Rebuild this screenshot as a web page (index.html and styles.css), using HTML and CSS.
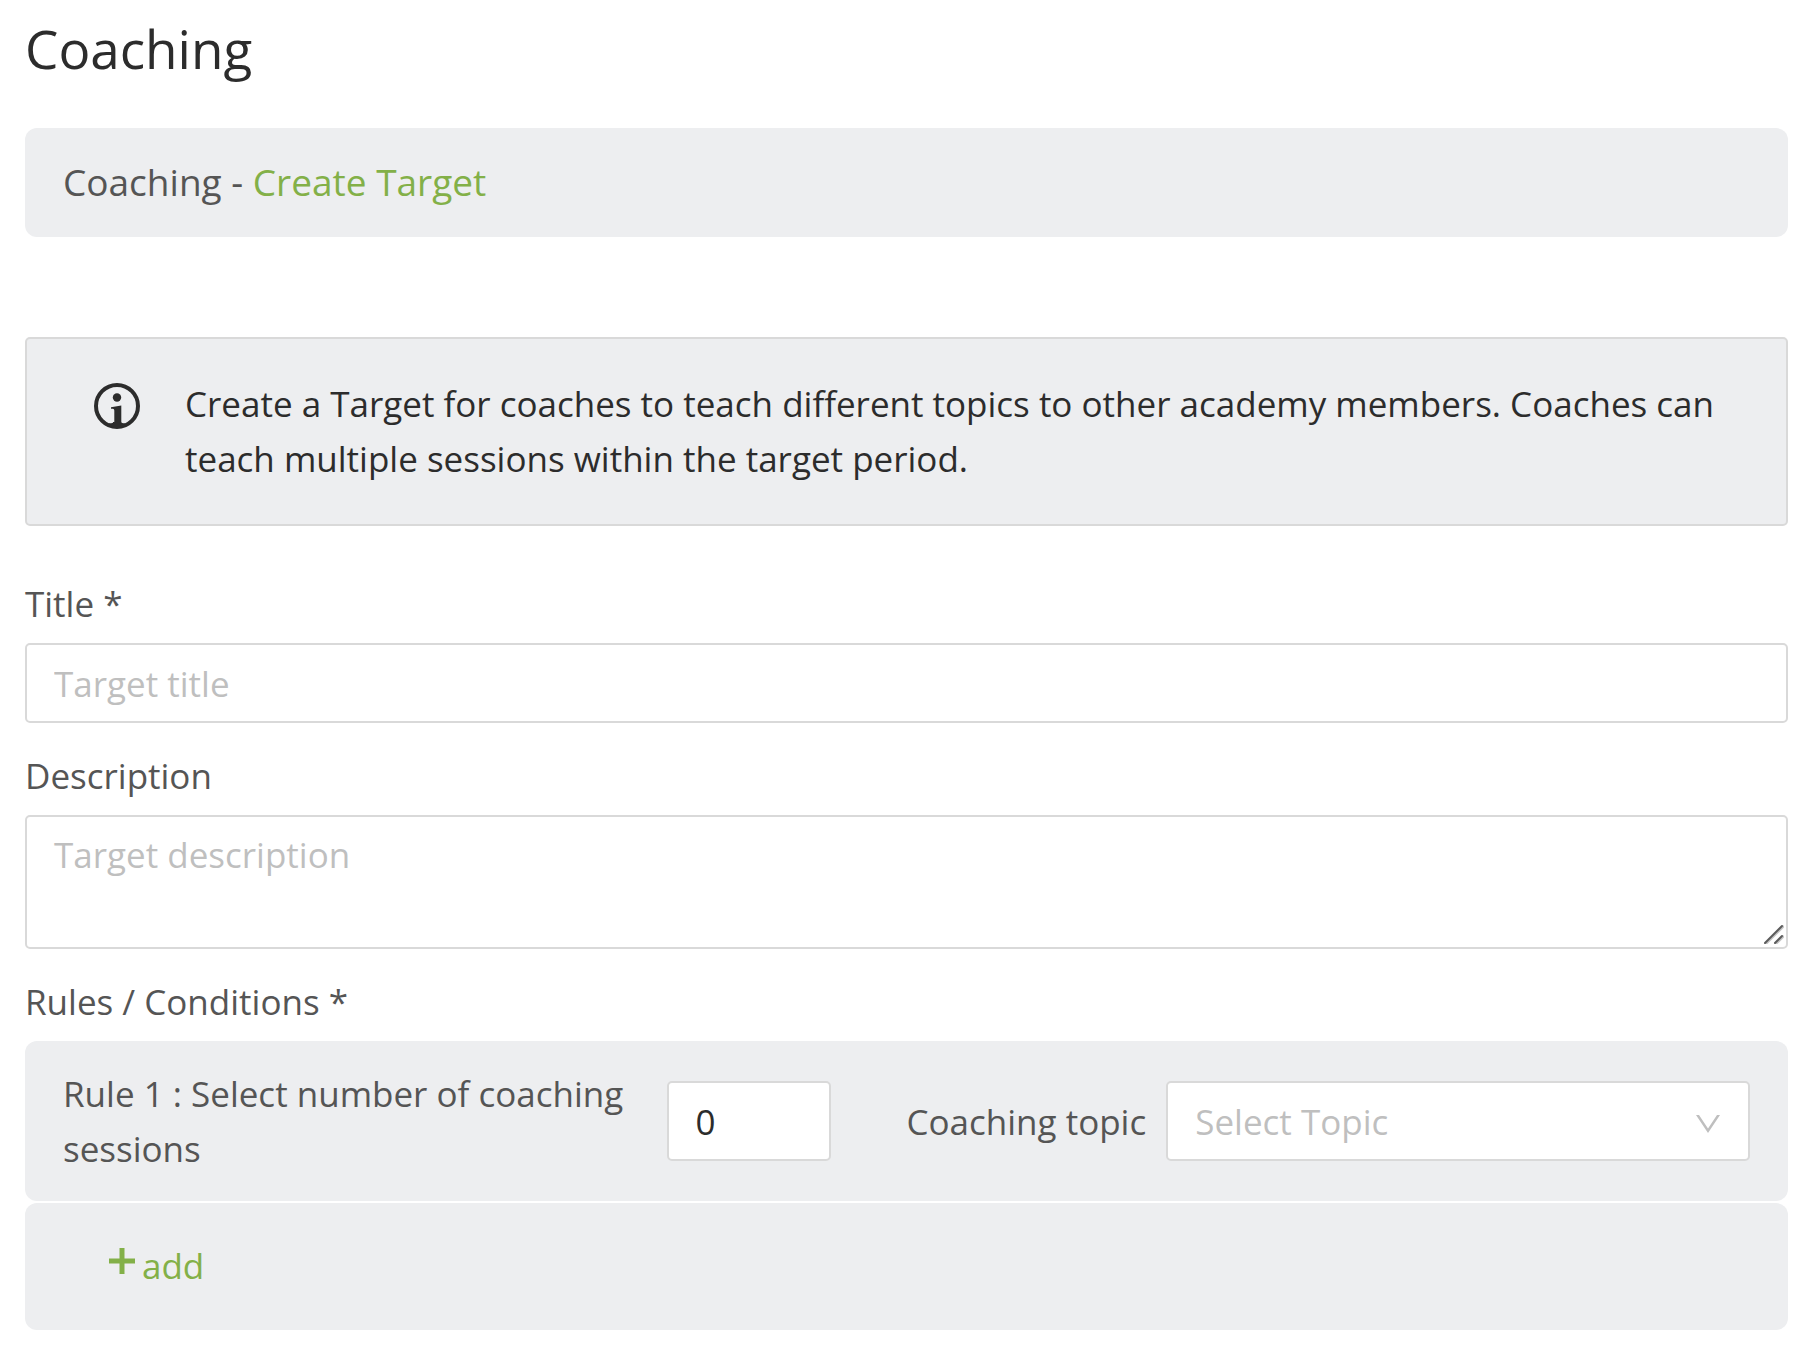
FILE: index.html
```html
<!DOCTYPE html>
<html lang="en">
<head>
  <meta charset="UTF-8">
  <meta name="viewport" content="width=device-width, initial-scale=1.0">
  <title>Coaching - Create Target</title>
  <link rel="stylesheet" href="styles.css">
</head>
<body>
  <h1>Coaching</h1>

  <h2 class="panel breadcrumb">Coaching - <span class="current">Create Target</span></h2>

  <div class="alert">
    <svg class="alert-icon" viewBox="0 0 46 46" aria-hidden="true">
      <circle cx="23" cy="23" r="21" fill="none" stroke="currentColor" stroke-width="4"/>
      <circle cx="23" cy="14.5" r="4.2" fill="currentColor"/>
      <path d="M17 24.2l10.3-1.7v16.2c0 1.2 1 1.5 4 1.5l-3 3.8h-11l-3-3.8c4.500 0 6-.3 6-1.700v-11c0-1.500-.7-1.700-3.300-1.800z" fill="currentColor"/>
    </svg>
    <p>Create a Target for coaches to teach different topics to other academy members. Coaches can teach multiple sessions within the target period.</p>
  </div>

  <form>
    <div class="field">
      <label for="title">Title *</label>
      <input class="control" type="text" id="title" placeholder="Target title">
    </div>

    <div class="field">
      <label for="description">Description</label>
      <div class="control-wrap">
        <textarea class="control" id="description" rows="2" placeholder="Target description"></textarea>
        <svg class="resizer" viewBox="0 0 20 20" aria-hidden="true">
          <path d="M2 20L20 2M12 20l8-8" stroke="#c4c4c4" stroke-width="2"/>
          <path d="M1 19L18 2M11 19l7-7" stroke="#5c5c5c" stroke-width="2" stroke-linecap="round"/>
        </svg>
      </div>
    </div>

    <!-- Rules -->
    <div class="field">
      <p class="group-label">Rules / Conditions *</p>
      <div class="panel rule">
        <div class="rule-count">
          <label for="sessions">Rule 1 : Select number of coaching sessions</label>
          <input class="control" type="text" inputmode="numeric" id="sessions" value="0">
        </div>
        <div class="rule-topic">
          <label for="topic">Coaching topic</label>
          <div class="control-wrap">
            <select class="control" id="topic">
              <option>Select Topic</option>
            </select>
            <svg class="chevron" viewBox="0 0 26 18" aria-hidden="true">
              <path d="M1 0h3l9 13.500L22 0h3L13 18z" fill="#bfbfbf"/>
            </svg>
          </div>
        </div>
      </div>
      <div class="panel add-row">
        <button type="button" class="add">
          <svg class="plus" viewBox="0 0 26 26" aria-hidden="true">
            <path d="M13 0v26M0 13h26" stroke="currentColor" stroke-width="5"/>
          </svg>
          <span>add</span>
        </button>
      </div>
    </div>
  </form>
</body>
</html>
```

FILE: styles.css
```css
* {
  box-sizing: border-box;
}
body {
  margin: 0;
  padding: 9px 25px 19px;
  font-family: "Open Sans", sans-serif;
  font-size: 35px;
  line-height: 55px;
  color: #555;
  background: #fff;
}
h1 {
  margin: 0 0 39px;
  font-size: 53px;
  line-height: 80px;
  font-weight: 400;
  color: #2c2c2c;
}
p {
  margin: 0;
}
.panel {
  background: #edeef0;
  border-radius: 12px;
}
.breadcrumb {
  margin: 0 0 100px;
  padding: 24px 38px 26px;
  font-size: 37px;
  line-height: 59px;
  font-weight: 400;
}
.current,
.add {
  color: #83b048;
}

/* info box */
.alert {
  display: flex;
  align-items: flex-start;
  gap: 45px;
  margin-bottom: 50px;
  padding: 37px 38px 38px 67px;
  border: 2px solid #d9d9d9;
  border-radius: 5px;
  background: #edeef0;
  color: #2c2c2c;
}
.alert-icon {
  flex: none;
  width: 46px;
  height: 46px;
  margin-top: 7px;
}

/* form fields */
.field {
  margin-bottom: 25px;
}
.field:last-child {
  margin-bottom: 0;
}
.field > label,
.group-label {
  display: block;
  margin-bottom: 12px;
}
.control {
  display: block;
  width: 100%;
  height: 80px;
  padding: 10px 27px;
  border: 2px solid #d9d9d9;
  border-radius: 5px;
  background: #fff;
  color: #2c2c2c;
  font: inherit;
}
.control::placeholder {
  color: #bfbfbf;
  opacity: 1;
}
textarea.control {
  height: auto;
  resize: none;
}
select.control {
  appearance: none;
  color: #bfbfbf;
}
.control-wrap {
  position: relative;
  flex: 1;
}
.resizer {
  position: absolute;
  right: 4px;
  bottom: 5px;
  width: 20px;
  height: 20px;
}
.chevron {
  position: absolute;
  right: 29px;
  bottom: 28px;
  width: 26px;
  height: 18px;
  pointer-events: none;
}

/* rules */
.rule {
  display: grid;
  grid-template-columns: 1fr 1fr;
  align-items: center;
  margin-bottom: 2px;
  padding: 25px 38px;
}
.rule-count,
.rule-topic {
  display: flex;
  align-items: center;
}
.rule-count {
  padding-right: 76px;
}
.rule-count label {
  flex: 1;
}
.rule-count .control {
  flex: none;
  width: 164px;
}
.rule-topic {
  gap: 20px;
}
.add-row {
  padding: 35px 84px 37px;
}
.add {
  display: flex;
  align-items: center;
  gap: 7px;
  padding: 0;
  border: 0;
  background: none;
  font: inherit;
  cursor: pointer;
}
.plus {
  width: 26px;
  height: 26px;
  margin-bottom: 9px;
}
```
